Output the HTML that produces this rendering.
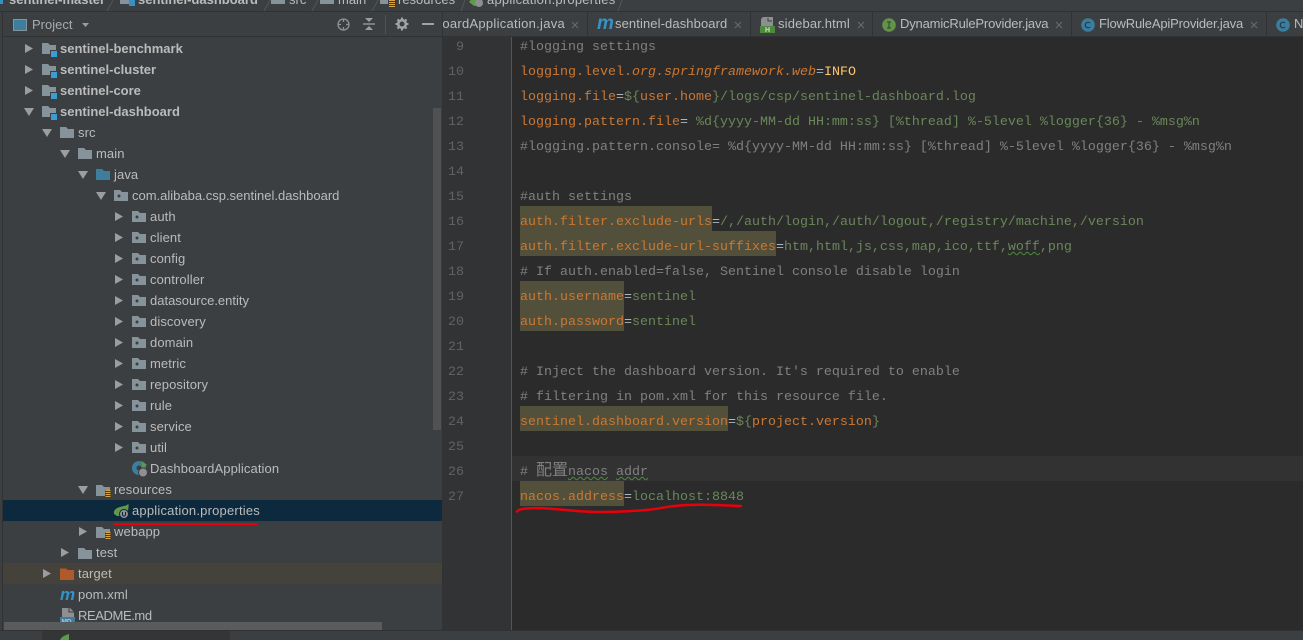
<!DOCTYPE html>
<html><head><meta charset="utf-8"><style>
html,body{margin:0;padding:0;background:#3c3f41;width:1303px;height:640px;overflow:hidden}
#r{position:relative;width:1303px;height:640px;overflow:hidden;font-family:"Liberation Sans","Noto Sans CJK SC",sans-serif;font-size:13px;color:#bbb}
.a{position:absolute}
.t{position:absolute;white-space:pre;line-height:21px;height:21px;color:#bbb;font-size:13px;letter-spacing:.1px}
.b{font-weight:bold;letter-spacing:0}
.c{position:absolute;white-space:pre;left:520px;height:25px;line-height:25px;font-family:"Liberation Mono","Noto Sans CJK SC",monospace;font-size:13.33px;color:#6a8759}
.n{position:absolute;left:443px;width:21px;text-align:right;height:25px;line-height:25px;font-family:"Liberation Mono",monospace;font-size:13.33px;color:#606366}
.k{color:#cc7832}.g{color:#808080}.i{font-style:italic}.v{color:#ffc66d}.o{color:#a9b7c6}
.h{position:absolute;left:520px;height:25px;background:#52503a}
.w{text-decoration:underline wavy #4f8a3c 1px}
.sep{position:absolute;top:12px;width:1px;height:24px;background:#323232}
svg{position:absolute;overflow:visible}
</style></head><body><div id="r">
<svg width="0" height="0" style="left:0;top:0"><defs>
<g id="ar"><path d="M0 0L8 4.500L0 9Z" fill="#9b9ea0"/></g>
<g id="ad"><path d="M0 0L10 0L5 8Z" fill="#9b9ea0"/></g>
<g id="f"><path d="M0 2H6L8 4H14V13H0Z" fill="#87939a"/></g>
<g id="m"><path d="M0 2H6L8 4H14V13H0Z" fill="#87939a"/><rect x="8" y="9" width="8" height="8" fill="#3c3f41"/><rect x="9" y="10" width="6" height="6" fill="#389fd6"/></g>
<g id="p"><path d="M0 2H6L8 4H14V13H0Z" fill="#87939a"/><circle cx="5" cy="8" r="1.500" fill="#3c3f41"/></g>
<g id="r1"><path d="M0 2H6L8 4H14V13H0Z" fill="#87939a"/><rect x="9" y="7" width="6" height="7" fill="#3c3f41"/><path d="M9.500 7.500h5M9.500 9.500h5M9.500 11.500h5M9.500 13.500h5" stroke="#d9a343" stroke-width="1"/></g>
<g id="x"><path d="M0 0L6 6M6 0L0 6" stroke="#6a6c6e" stroke-width="1"/></g>
</defs></svg>

<!-- breadcrumb -->
<div class="a" style="left:0;top:0;width:1303px;height:12px;background:#3c3f41;overflow:hidden">
<div class="a" style="left:0;top:-2px;width:3px;height:6px;background:#3592c4"></div>
<span class="a b" style="left:9px;top:-8px;font-size:13px;white-space:pre;color:#bbb">sentinel-master</span>
<div class="a" style="left:120px;top:-2px;width:14px;height:6px;background:#87939a"></div><div class="a" style="left:129px;top:0;width:6px;height:6px;background:#3592c4"></div>
<span class="a b" style="left:138px;top:-8px;white-space:pre;color:#bbb">sentinel-dashboard</span>
<div class="a" style="left:271px;top:-2px;width:14px;height:6px;background:#87939a"></div>
<span class="a" style="left:289px;top:-8px;white-space:pre;color:#bbb">src</span>
<div class="a" style="left:320px;top:-2px;width:14px;height:6px;background:#87939a"></div>
<span class="a" style="left:338px;top:-8px;white-space:pre;color:#bbb">main</span>
<div class="a" style="left:380px;top:-2px;width:8px;height:6px;background:#87939a"></div><div class="a" style="left:389px;top:0;width:6px;height:7px;background:repeating-linear-gradient(#d9a343 0 1px,transparent 1px 2px)"></div>
<span class="a" style="left:398px;top:-8px;white-space:pre;color:#bbb">resources</span>
<svg style="left:469px;top:-2px" width="16" height="12"><path d="M0 4C4 -2 10 0 14 -2C14 5 10 8 5 8Z" fill="#5f9a4c"/><circle cx="10" cy="5" r="4" fill="#8d8f91"/></svg>
<span class="a" style="left:487px;top:-8px;white-space:pre;color:#bbb;letter-spacing:.22px">application.properties</span>
<svg style="left:0;top:0" width="700" height="12"><path d="M107 11L113 0M264 11L270 0M312 11L318 0M372 11L378 0M461 11L465 0M618 11L622 0" stroke="#555" fill="none"/></svg>
</div>
<div class="a" style="left:0;top:11px;width:1303px;height:1px;background:#323232"></div>

<!-- left edge -->
<div class="a" style="left:0;top:12px;width:3px;height:628px;background:#3c3f41"></div>
<div class="a" style="left:2px;top:12px;width:1px;height:618px;background:#323232"></div>

<!-- project header -->
<div class="a" style="left:3px;top:12px;width:439px;height:25px;background:#3c3f41"></div>
<div class="a" style="left:3px;top:36px;width:439px;height:1px;background:#323232"></div>
<div class="a" style="left:13px;top:19px;width:12px;height:10px;background:#3d7d9e;border:1px solid #87939a"></div>
<span class="a" style="left:32px;top:17px;white-space:pre;color:#a9abad;line-height:15px">Project</span>
<svg style="left:82px;top:23px" width="8" height="5"><path d="M0 0H7L3.500 4Z" fill="#9b9ea0"/></svg>
<svg style="left:336px;top:17px" width="15" height="15"><circle cx="7.500" cy="7.500" r="5.500" fill="none" stroke="#8f9193" stroke-width="1.300"/><path d="M7.500 2v3M7.500 10v3M2 7.500h3M10 7.500h3" stroke="#8f9193" stroke-width="1.300"/></svg>
<svg style="left:362px;top:17px" width="14" height="14"><path d="M1 7H13" stroke="#9b9ea0" stroke-width="1.300"/><path d="M3 1H11L7 5ZM3 13H11L7 9Z" fill="#9b9ea0"/></svg>
<div class="a" style="left:385px;top:15px;width:1px;height:19px;background:#505254"></div>
<svg style="left:395px;top:17px" width="14" height="14"><circle cx="7" cy="7" r="3.800" fill="none" stroke="#a0a2a4" stroke-width="2.600"/><path d="M7 0.500V3M7 11V13.500M0.500 7H3M11 7H13.500M2.400 2.400L4 4M10 10L11.600 11.600M2.400 11.600L4 10M10 4L11.600 2.400" stroke="#a0a2a4" stroke-width="2"/></svg>
<div class="a" style="left:422px;top:23px;width:12px;height:2px;background:#a0a2a4"></div>

<!-- tree rows bg -->
<div class="a" style="left:3px;top:500px;width:439px;height:21px;background:#0d293e"></div>
<div class="a" style="left:3px;top:563px;width:439px;height:21px;background:#45423b"></div>

<!-- tree -->
<svg style="left:0;top:0" width="442" height="630">
<use href="#ar" x="25" y="44"/><use href="#m" x="42" y="41"/>
<use href="#ar" x="25" y="65"/><use href="#m" x="42" y="62"/>
<use href="#ar" x="25" y="86"/><use href="#m" x="42" y="83"/>
<use href="#ad" x="24" y="108"/><use href="#m" x="42" y="104"/>
<use href="#ad" x="42" y="129"/><use href="#f" x="60" y="125"/>
<use href="#ad" x="60" y="150"/><use href="#f" x="78" y="146"/>
<use href="#ad" x="78" y="171"/><path d="M96 169H102L104 171H110V180H96Z" fill="#3d7d9e"/>
<use href="#ad" x="96" y="192"/><use href="#p" x="114" y="188"/>
<use href="#ar" x="115" y="212"/><use href="#p" x="132" y="209"/>
<use href="#ar" x="115" y="233"/><use href="#p" x="132" y="230"/>
<use href="#ar" x="115" y="254"/><use href="#p" x="132" y="251"/>
<use href="#ar" x="115" y="275"/><use href="#p" x="132" y="272"/>
<use href="#ar" x="115" y="296"/><use href="#p" x="132" y="293"/>
<use href="#ar" x="115" y="317"/><use href="#p" x="132" y="314"/>
<use href="#ar" x="115" y="338"/><use href="#p" x="132" y="335"/>
<use href="#ar" x="115" y="359"/><use href="#p" x="132" y="356"/>
<use href="#ar" x="115" y="380"/><use href="#p" x="132" y="377"/>
<use href="#ar" x="115" y="401"/><use href="#p" x="132" y="398"/>
<use href="#ar" x="115" y="422"/><use href="#p" x="132" y="419"/>
<use href="#ar" x="115" y="443"/><use href="#p" x="132" y="440"/>
<circle cx="139" cy="468" r="7" fill="#3d7d9e"/><circle cx="139" cy="468" r="2.500" fill="#3c3f41"/><path d="M142 461L147 465L142 468Z" fill="#5f9a4c"/><circle cx="143" cy="472.500" r="4.500" fill="#8d8f91" stroke="#3c3f41"/>
<use href="#ad" x="78" y="486"/><use href="#r1" x="96" y="483"/>
<path d="M114 514C113 508 120 507 124 506C126 505.500 127 505 128.500 504C129 510 127 514 124 516H117Z" fill="#5f9a4c"/><circle cx="124" cy="514" r="4.500" fill="#8d8f91" stroke="#0d293e"/><path d="M122.500 512v2.500a1.500 1.500 0 0 0 3 0V512" fill="none" stroke="#0d293e"/>
<use href="#ar" x="79" y="527"/><use href="#r1" x="96" y="525"/>
<use href="#ar" x="61" y="548"/><use href="#f" x="78" y="546"/>
<use href="#ar" x="43" y="569"/><path d="M60 568.500H66L68 570H74V580H60Z" fill="#b0592a"/>
<text x="60" y="600" fill="#3592c4" font-family="Liberation Sans,sans-serif" font-size="17" font-weight="bold" font-style="italic">m</text>
<path d="M62 608H70L74 612V621H62Z" fill="#8d8f91"/><path d="M69 608V612H74" fill="none" stroke="#3c3f41"/><rect x="60" y="617" width="15" height="7" fill="#3d7d9e"/><text x="61.500" y="623.500" fill="#a8c4d4" font-family="Liberation Sans,sans-serif" font-size="6.500" font-weight="bold">MD</text>
</svg>
<span class="t b" style="left:60px;top:38px">sentinel-benchmark</span>
<span class="t b" style="left:60px;top:59px">sentinel-cluster</span>
<span class="t b" style="left:60px;top:80px">sentinel-core</span>
<span class="t b" style="left:60px;top:101px">sentinel-dashboard</span>
<span class="t" style="left:78px;top:122px">src</span>
<span class="t" style="left:96px;top:143px">main</span>
<span class="t" style="left:114px;top:164px">java</span>
<span class="t" style="left:132px;top:185px;letter-spacing:0">com.alibaba.csp.sentinel.dashboard</span>
<span class="t" style="left:150px;top:206px">auth</span>
<span class="t" style="left:150px;top:227px">client</span>
<span class="t" style="left:150px;top:248px">config</span>
<span class="t" style="left:150px;top:269px">controller</span>
<span class="t" style="left:150px;top:290px;letter-spacing:0">datasource.entity</span>
<span class="t" style="left:150px;top:311px">discovery</span>
<span class="t" style="left:150px;top:332px">domain</span>
<span class="t" style="left:150px;top:353px">metric</span>
<span class="t" style="left:150px;top:374px">repository</span>
<span class="t" style="left:150px;top:395px">rule</span>
<span class="t" style="left:150px;top:416px">service</span>
<span class="t" style="left:150px;top:437px">util</span>
<span class="t" style="left:150px;top:458px">DashboardApplication</span>
<span class="t" style="left:114px;top:479px">resources</span>
<span class="t" style="left:132px;top:500px;letter-spacing:.2px">application.properties</span>
<span class="t" style="left:114px;top:521px">webapp</span>
<span class="t" style="left:96px;top:542px">test</span>
<span class="t" style="left:78px;top:563px">target</span>
<span class="t" style="left:78px;top:584px">pom.xml</span>
<span class="t" style="left:78px;top:605px;letter-spacing:-.4px">README.md</span>
<div class="a" style="left:113px;top:523px;width:144px;height:2px;background:#e8000b"></div>

<!-- scrollbars -->
<div class="a" style="left:433px;top:108px;width:8px;height:322px;background:#4f5153"></div>
<div class="a" style="left:4px;top:622px;width:378px;height:8px;background:#5a5b5c"></div>
<div class="a" style="left:442px;top:12px;width:1px;height:618px;background:#323232"></div>

<!-- bottom -->
<div class="a" style="left:0;top:631px;width:1303px;height:9px;background:#3c3f41"></div>
<div class="a" style="left:0;top:630px;width:1303px;height:1px;background:#323232"></div>
<div class="a" style="left:42px;top:631px;width:188px;height:9px;background:#333537"></div>
<svg style="left:60px;top:634px" width="10" height="6"><path d="M0 6C2 2 6 1 9 0V6Z" fill="#5f9a4c"/></svg>

<!-- tabs -->
<div class="a" style="left:443px;top:12px;width:860px;height:25px;background:#3c3f41"></div>
<div class="a" style="left:443px;top:36px;width:860px;height:1px;background:#323232"></div>
<div class="sep" style="left:587px"></div><div class="sep" style="left:750px"></div><div class="sep" style="left:872px"></div><div class="sep" style="left:1071px"></div><div class="sep" style="left:1266px"></div>
<div class="a" style="left:443px;top:12px;width:122px;height:24px;overflow:hidden"><span class="a" style="right:0;top:4px;white-space:pre;line-height:16px;color:#bbb;letter-spacing:.28px">boardApplication.java</span></div>
<svg style="left:572px;top:22px" width="8" height="8"><use href="#x"/></svg>
<span class="a" style="left:597px;top:15px;font:italic bold 19px/18px 'Liberation Sans',sans-serif;color:#3592c4">m</span>
<span class="a" style="left:615px;top:16px;white-space:pre;line-height:16px;color:#bbb;letter-spacing:.1px">sentinel-dashboard</span>
<svg style="left:735px;top:22px" width="8" height="8"><use href="#x"/></svg>
<svg style="left:760px;top:17px" width="16" height="17"><path d="M3 0H13V10H1V2Z" fill="#8d8f91"/><path d="M8 1V4H12" stroke="#3c3f41" fill="none"/><rect x="0" y="9" width="15" height="7" fill="#4f8a3c"/><text x="5" y="15" fill="#cfe0c8" font-family="Liberation Sans,sans-serif" font-size="7" font-weight="bold">H</text></svg>
<span class="a" style="left:778px;top:16px;white-space:pre;line-height:16px;color:#bbb;letter-spacing:.15px">sidebar.html</span>
<svg style="left:858px;top:22px" width="8" height="8"><use href="#x"/></svg>
<svg style="left:882px;top:18px" width="14" height="14"><circle cx="7" cy="7" r="6.800" fill="#62934a"/><path d="M5 4H9M5 10H9M7 4V10" stroke="#2f3f28" stroke-width="1"/></svg>
<span class="a" style="left:900px;top:16px;white-space:pre;line-height:16px;color:#bbb;letter-spacing:-.17px">DynamicRuleProvider.java</span>
<svg style="left:1056px;top:22px" width="8" height="8"><use href="#x"/></svg>
<svg style="left:1081px;top:18px" width="14" height="14"><circle cx="7" cy="7" r="6.800" fill="#3a7d9e"/><path d="M9 5A2.800 2.800 0 1 0 9 9" fill="none" stroke="#233a47" stroke-width="1.200"/></svg>
<span class="a" style="left:1099px;top:16px;white-space:pre;line-height:16px;color:#bbb;letter-spacing:-.17px">FlowRuleApiProvider.java</span>
<svg style="left:1251px;top:22px" width="8" height="8"><use href="#x"/></svg>
<svg style="left:1276px;top:18px" width="14" height="14"><circle cx="7" cy="7" r="6.800" fill="#3a7d9e"/><path d="M9 5A2.800 2.800 0 1 0 9 9" fill="none" stroke="#233a47" stroke-width="1.200"/></svg>
<span class="a" style="left:1294px;top:16px;white-space:pre;line-height:16px;color:#bbb">N</span>

<!-- editor -->
<div class="a" style="left:443px;top:37px;width:860px;height:593px;background:#2b2b2b"></div>
<div class="a" style="left:443px;top:37px;width:68px;height:593px;background:#313335"></div>
<div class="a" style="left:511px;top:37px;width:1px;height:593px;background:#555"></div>
<div class="a" style="left:512px;top:456px;width:791px;height:25px;background:#323232"></div>

<div class="h" style="top:206px;width:192px"></div>
<div class="h" style="top:231px;width:256px"></div>
<div class="h" style="top:281px;width:104px"></div>
<div class="h" style="top:306px;width:104px"></div>
<div class="h" style="top:406px;width:208px"></div>
<div class="h" style="top:481px;width:104px"></div>

<div class="n" style="top:35px">9</div><div class="n" style="top:60px">10</div><div class="n" style="top:85px">11</div><div class="n" style="top:110px">12</div><div class="n" style="top:135px">13</div><div class="n" style="top:160px">14</div><div class="n" style="top:185px">15</div><div class="n" style="top:210px">16</div><div class="n" style="top:235px">17</div><div class="n" style="top:260px">18</div><div class="n" style="top:285px">19</div><div class="n" style="top:310px">20</div><div class="n" style="top:335px">21</div><div class="n" style="top:360px">22</div><div class="n" style="top:385px">23</div><div class="n" style="top:410px">24</div><div class="n" style="top:435px">25</div><div class="n" style="top:460px">26</div><div class="n" style="top:485px">27</div>

<div class="c g" style="top:35px">#logging settings</div>
<div class="c" style="top:60px"><span class="k">logging.level.</span><span class="k i">org.springframework.web</span><span class="o">=</span><span class="v">INFO</span></div>
<div class="c" style="top:85px"><span class="k">logging.file</span><span class="o">=</span>${<span class="k">user.home</span>}/logs/csp/sentinel-dashboard.log</div>
<div class="c" style="top:110px"><span class="k">logging.pattern.file</span><span class="o">=</span> %d{yyyy-MM-dd HH:mm:ss} [%thread] %-5level %logger{36} - %msg%n</div>
<div class="c g" style="top:135px">#logging.pattern.console= %d{yyyy-MM-dd HH:mm:ss} [%thread] %-5level %logger{36} - %msg%n</div>
<div class="c g" style="top:185px">#auth settings</div>
<div class="c" style="top:210px"><span class="k">auth.filter.exclude-urls</span><span class="o">=</span>/,/auth/login,/auth/logout,/registry/machine,/version</div>
<div class="c" style="top:235px"><span class="k">auth.filter.exclude-url-suffixes</span><span class="o">=</span>htm,html,js,css,map,ico,ttf,<span class="w">woff</span>,png</div>
<div class="c g" style="top:260px"># If auth.enabled=false, Sentinel console disable login</div>
<div class="c" style="top:285px"><span class="k">auth.username</span><span class="o">=</span>sentinel</div>
<div class="c" style="top:310px"><span class="k">auth.password</span><span class="o">=</span>sentinel</div>
<div class="c g" style="top:360px"># Inject the dashboard version. It's required to enable</div>
<div class="c g" style="top:385px"># filtering in pom.xml for this resource file.</div>
<div class="c" style="top:410px"><span class="k">sentinel.dashboard.version</span><span class="o">=</span>${<span class="k">project.version</span>}</div>
<div class="c g" style="top:459px"># <span style="font-size:16px">配置</span><span class="w">nacos</span> <span class="w">addr</span></div>
<div class="c" style="top:485px"><span class="k">nacos.address</span><span class="o">=</span>localhost:8848</div>
<svg style="left:0;top:0" width="1303" height="640"><path d="M517 511.500C519 509 524 508 540 508C560 509 580 512 600 512C620 512 635 511 645 510C660 509 668 506 680 505.500C695 504 715 505 741 506" fill="none" stroke="#e8000b" stroke-width="2.500" stroke-linecap="round"/></svg>
</div></body></html>
